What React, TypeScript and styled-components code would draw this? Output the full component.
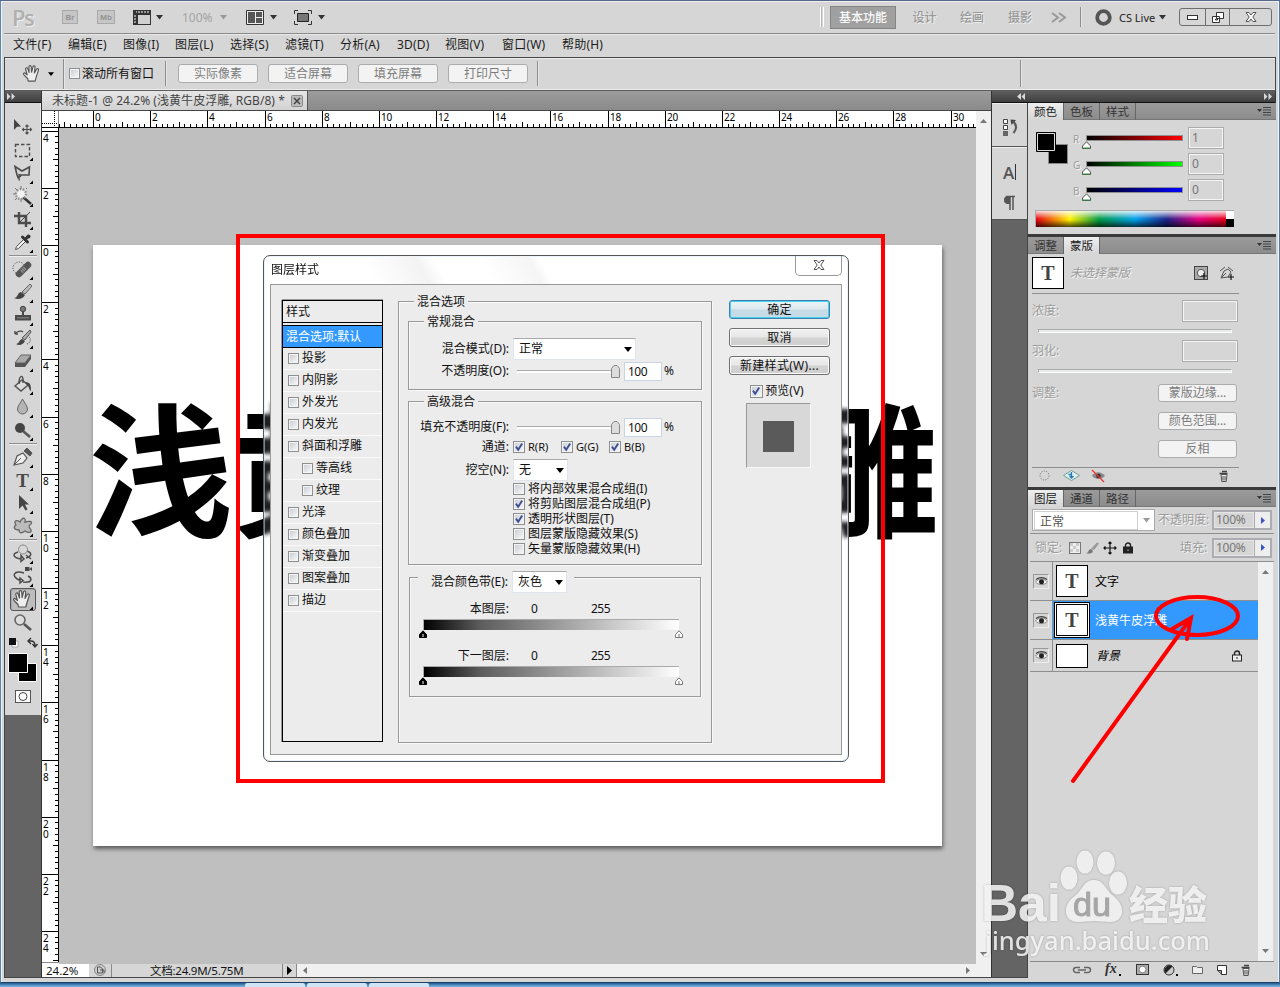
import React from "react";
import styled, { createGlobalStyle, css } from "styled-components";

const Global = createGlobalStyle`
  * { box-sizing: border-box; }
  html, body { margin: 0; padding: 0; width: 1280px; height: 987px; overflow: hidden; }
  body { font: 12px/16px "Noto Sans", "Noto Sans CJK SC", sans-serif; color: #111; }
  svg { display: block; flex: none; overflow: visible; }
`;

/* ---------- frame ---------- */
const Desktop = styled.div`
  position: relative; width: 1280px; height: 987px; overflow: hidden;
  background: #d6d6d6;
  border-top: 1px solid #55668a;
  display: flex; flex-direction: column;
`;
const Shell = styled.div`
  height: 982px; display: flex; flex-direction: column; padding: 0 4px 4px 3px;
  border-left: 1px solid #5b86a8; border-right: 1px solid #5b7aa0; border-bottom: 1px solid #1f4166;
  background: #d6d6d6; box-shadow: inset 1px 0 #eef2f6, inset -1px 0 #eef2f6, inset 0 1px #eeeeee;
`;
const Taskbar = styled.div`
  flex: 1; display: flex; padding-left: 245px; gap: 2px; background: linear-gradient(#1e5a92, #7fbbe6);
`;
const TaskItem = styled.div` width: 60px; background: #cfe4f5; border-radius: 2px 2px 0 0; `;

/* ---------- application bar ---------- */
const AppBar = styled.div`
  height: 33px; display: flex; align-items: center; padding-left: 8px; border-bottom: 1px solid #8b8b8b;
`;
const PsLogo = styled.div`
  width: 50px; font: 600 22px/30px "Open Sans", sans-serif; color: #b0b0b0; text-shadow: 1px 1px #efefef; letter-spacing: -1.5px;
`;
const Chip = styled.div<{ $w?: number }>`
  width: ${p => p.$w || 16}px; height: 14px; border: 1px solid #a9a9a9; background: #c6c6c6;
  font: bold 8px/13px "Liberation Sans", sans-serif; color: #929292; text-align: center;
`;
const Gap = styled.div<{ $w: number }>` width: ${p => p.$w}px; flex: none; white-space: nowrap; `;
const Pct = styled.div` width: 38px; color: #a4a4a4; font-size: 12px; padding-top: 1px; `;
const Grow = styled.div` flex: 1; `;
const DoubleBar = styled.div` width: 4px; height: 20px; border-left: 1px solid #fff; border-right: 1px solid #fff; box-shadow: inset 1px 0 #b5b5b5; margin-right: 6px; `;
const Workspace = styled.div<{ $on?: boolean; $w: number }>`
  width: ${p => p.$w}px; height: 23px; line-height: 24px; text-align: center; color: #989898; text-shadow: 1px 1px #eee; font-weight: 500;
  ${p => p.$on && css`background: #a0a0a0; border: 1px solid #848484; color: #fafafa; text-shadow: none; line-height: 22px;`}
`;
const VLine = styled.div<{ $h: number }>` width: 1px; flex: none; height: ${p => p.$h}px; background: #8d8d8d; box-shadow: 1px 0 #e6e6e6; `;
const Live = styled.div` width: 40px; font-size: 11px; white-space: nowrap; color: #222; padding-top: 1px; `;
const WinButtons = styled.div`
  display: flex; width: 93px; height: 18px; border: 1px solid #6e6e6e; border-radius: 3px; margin-right: 3px;
`;
const WinButton = styled.div<{ $w: number }>`
  width: ${p => p.$w}px; display: flex; align-items: center; justify-content: center;
  & + & { border-left: 1px solid #6e6e6e; }
`;

const MenuBar = styled.div`
  height: 23px; display: flex; align-items: center; padding-left: 9px; border-top: 1px solid #e8e8e8; padding-bottom: 2px;
`;
const MenuItem = styled.div<{ $w: number }>` width: ${p => p.$w}px; white-space: nowrap; letter-spacing: 0.2px; color: #1c1c1c; `;

/* ---------- options bar ---------- */
const Options = styled.div`
  height: 34px; display: flex; align-items: center; border: 1px solid #454545; border-bottom: 1px solid #5b5b5b;
  box-shadow: inset 0 1px #ececec, inset 0 -1px #ececec; margin-right: -1px; padding-bottom: 1px;
`;
const Grip = styled.div` width: 4px; height: 23px; margin: 0 9px 0 4px; background: radial-gradient(#8f8f8f 40%, transparent 50%) 0 0 / 2px 2px; `;
const PushButton = styled.div<{ $w: number; $h?: number }>`
  width: ${p => p.$w}px; height: ${p => p.$h || 19}px; line-height: ${p => (p.$h || 19) - 2}px; text-align: center;
  border: 1px solid #a9abad; border-radius: 3px; background: #f3f3f3; color: #7c7c7c; white-space: nowrap;
`;
const ButtonSet = styled.div` display: flex; gap: 10px; margin: 0 9px 0 12px; `;
const BoxOuter = styled.span<{ $s: number }>`
  width: ${p => p.$s}px; height: ${p => p.$s}px; flex: none; border: 1px solid #8e8f8f; padding: 1px; background: #f4f4f4; display: block;
`;
const BoxInner = styled.span` display: block; width: 100%; height: 100%; background: linear-gradient(135deg, #cbcfd5, #f6f6f6); `;
const Check = ({ s = 12, on = false }: { s?: number; on?: boolean }) => (
  <BoxOuter $s={s}>
    <BoxInner>{on && <svg width="8" height="8" viewBox="0 0 8 8"><path d="M1 3.6 3.2 6.8 7.2 .6" fill="none" stroke="#3d4f97" strokeWidth="1.9" /></svg>}</BoxInner>
  </BoxOuter>
);

/* ---------- body ---------- */
const Body = styled.div` flex: 1; min-height: 0; display: flex; border-left: 1px solid #454545; border-bottom: 1px solid #454545; margin-right: -1px; border-right: 1px solid #3a3a3a; background: #646464; `;
const DarkHead = styled.div`
  height: 12px; display: flex; align-items: center; justify-content: space-between; padding: 0 2px;
  background: linear-gradient(#5e5e5e, #3f3f3f); border-bottom: 1px solid #111; width: 100%;
`;
const Tools = styled.div` width: 37px; border-right: 1px solid #333; flex: none; `;
const ToolPanel = styled.div` height: 612px; background: #d6d6d6; display: flex; flex-direction: column; align-items: center; border-right: 1px solid #eaeaea; `;
const DotRow = styled.div<{ $w?: number }>` width: ${p => p.$w || 27}px; height: 3px; margin: 4px auto 6px; background: radial-gradient(#8d8d8d 40%, transparent 50%) 0 0 / 2px 2px; `;
const Tool = styled.div<{ $on?: boolean }>`
  width: 26px; height: 23px; flex: none; display: flex; align-items: center; justify-content: center;
  ${p => p.$on && css`background: #bdbdbd; border: 1px solid #555; border-radius: 3px; box-shadow: inset 1px 1px #a8a8a8;`}
`;
const ToolRule = styled.div` width: 28px; height: 2px; margin: 1px 0; background: #8f8f8f; border-bottom: 1px solid #eee; flex: none; `;

const Doc = styled.div` width: 950px; flex: none; border-right: 1px solid #333; display: flex; flex-direction: column; background: #bfbfbf; `;
const TabStrip = styled.div` height: 20px; flex: none; background: linear-gradient(#9c9c9c, #8a8a8a); border-bottom: 1px solid #444; display: flex; `;
const DocTab = styled.div`
  width: 266px; height: 19px; background: linear-gradient(#e6e6e6, #d2d2d2); border-right: 1px solid #555; padding: 1px 0 0 10px; display: flex; align-items: center; color: #444; white-space: nowrap;
`;
const TabTitle = styled.div` width: 239px; letter-spacing: .05px; `;
const DocRow = styled.div` display: flex; flex: 1; min-height: 0; `;
const Canvas = styled.div` position: relative; width: 917px; height: 836px; background: #bfbfbf; overflow: hidden; `;
const Paper = styled.div`
  position: absolute; left: 34px; top: 117px; width: 849px; height: 601px; background: #fff; box-shadow: 1px 3px 4px rgba(0,0,0,.5);
  font: 700 144px/148px "Noto Sans CJK SC", sans-serif; letter-spacing: -2.9px; color: #000; white-space: nowrap; padding-top: 144px; text-indent: -4px;
`;
const DocMain = styled.div` width: 934px; display: flex; flex-direction: column; `;
const VScroll = styled.div<{ $w: number; $pb?: number }>`
  width: ${p => p.$w}px; flex: none; background: #f0f0f0; display: flex; flex-direction: column; justify-content: space-between; align-items: center; padding: 6px 0 ${p => p.$pb || 6}px;
`;
const Status = styled.div` height: 15px; flex: none; display: flex; background: #d6d6d6; border-top: 1px solid #8a8a8a; align-items: center; `;
const Zoomed = styled.div` width: 47px; background: #fff; padding-left: 4px; font-size: 11.5px; line-height: 16px; height: 14px; `;
const StatusIcon = styled.div` width: 23px; height: 14px; display: flex; align-items: center; justify-content: center; border-right: 1px solid #888; `;
const DocSize = styled.div` width: 171px; height: 14px; line-height: 15px; padding-left: 38px; border-right: 1px solid #888; font-size: 11.5px; letter-spacing: -.25px; white-space: nowrap; `;
const StatusArrow = styled.div` width: 14px; height: 14px; border-right: 1px solid #888; display: flex; align-items: center; justify-content: center; `;
const HScroll = styled.div` flex: 1; height: 14px; background: #f0f0f0; display: flex; align-items: center; justify-content: space-between; padding: 0 5px; `;

/* ---------- dock ---------- */
const Dock = styled.div` flex: 1; min-width: 0; display: flex; flex-direction: column; `;
const DockHeads = styled(DarkHead)` padding: 0 3px 0 25px; `;
const DockRow = styled.div` display: flex; flex: 1; min-height: 0; `;
const IconCol = styled.div` width: 36px; border-right: 1px solid #444; flex: none; `;
const IconGroup = styled.div<{ $h: number }>` height: ${p => p.$h}px; background: #d6d6d6; border-bottom: 1px solid #555; border-top: 1px solid #eee; display: flex; flex-direction: column; align-items: center; `;
const Panels = styled.div` flex: 1; display: flex; flex-direction: column; background: #3a3a3a; gap: 3px; `;
const Panel = styled.div<{ $h: number }>` height: ${p => p.$h}px; flex: none; background: #d6d6d6; display: flex; flex-direction: column; `;
const PanelTabs = styled.div` height: 17px; flex: none; display: flex; background: linear-gradient(#9b9b9b, #8c8c8c); border-bottom: 1px solid #777; `;
const PanelTab = styled.div<{ $on?: boolean }>`
  width: 36px; height: 17px; line-height: 17px; padding-left: 6px; font-size: 11.5px; white-space: nowrap; border-right: 1px solid #666; color: #333;
  ${p => p.$on && css`background: linear-gradient(#eee, #d6d6d6); color: #222;`}
`;
const TabMenu = styled.div` margin-left: auto; padding: 4px 5px 0 0; `;
const PanelBody = styled.div<{ $p?: string }>` flex: 1; min-height: 0; padding: ${p => p.$p || "0"}; `;
const Line = styled.div<{ $m?: string }>` height: 1px; background: #8e8e8e; margin: ${p => p.$m || "0"}; flex: none; `;
const Row = styled.div<{ $h: number; $p?: string; $mt?: number }>`
  display: flex; align-items: center; height: ${p => p.$h}px; padding: ${p => p.$p || "0"}; margin-top: ${p => p.$mt || 0}px; flex: none; white-space: nowrap;
`;
const Etched = styled.span<{ $w: number; $it?: boolean; $ml?: number }>`
  width: ${p => p.$w}px; margin-left: ${p => p.$ml || 0}px; flex: none; color: #9c9c9c; text-shadow: 1px 1px #f4f4f4; white-space: nowrap; font-style: ${p => (p.$it ? "italic" : "normal")};
`;
const ChannelName = styled(Etched)` padding-top: 4px; font-size: 10px; `;
const Etch = styled.div<{ $w: number; $h: number; $ml?: number }>`
  width: ${p => p.$w}px; height: ${p => p.$h}px; flex: none; border: 1px solid #acacac; box-shadow: inset 0 0 0 1px #f5f5f5; color: #777; padding: 0 3px; line-height: ${p => p.$h - 2}px; font-size: 12px;
  margin-left: ${p => p.$ml || 0}px;
`;
const ChannelBar = styled.div<{ $c: string }>` width: 97px; height: 6px; border: 1px solid #909090; background: linear-gradient(90deg, #000, ${p => p.$c}); margin-left: 6px; `;
const ChannelTrack = styled.div` width: 115px; padding-top: 3px; `;
const ColorRow = styled.div` display: flex; height: 26px; align-items: flex-start; `;
const ColorTop = styled.div` display: flex; height: 90px; padding-top: 7px; `;
const SwatchBox = styled.div` width: 45px; padding: 5px 0 0 8px; `;
const Rows = styled.div` flex: 1; `;
const Spectrum = styled.div`
  margin-left: 7px; width: 199px; height: 17px; border-top: 1px solid #aaa; border-left: 1px solid #aaa; display: flex; justify-content: flex-end;
  background: linear-gradient(rgba(255,255,255,.85), rgba(255,255,255,0) 50%, rgba(0,0,0,0) 55%, rgba(0,0,0,.7)), linear-gradient(90deg, #e60012, #fff100 17%, #009944 32%, #00a0e9 50%, #1d2088 66%, #e4007f 82%, #e60012 97%);
`;
const BW = styled.div` width: 8px; height: 16px; background: linear-gradient(#fff 50%, #000 50%); `;
const SliderGroove = styled.div` width: 194px; height: 4px; border: 1px solid #aaa; border-bottom-color: #fff; border-right-color: #fff; background: #e8ecea; `;
const Thumb = styled.div<{ $h?: number; $sel?: boolean }>`
  width: 32px; height: ${p => p.$h || 32}px; background: #fff; border: 1px solid #000; flex: none; display: flex; align-items: center; justify-content: center;
  font: bold 20px/28px "Liberation Serif", serif; color: #444;
  ${p => p.$sel && css`outline: 1px solid #fff; box-shadow: 0 0 0 2px #000;`}
`;
const Combo = styled.div`
  width: 123px; height: 22px; border: 1px solid #aaa; background: #fff; display: flex; align-items: center; justify-content: space-between; padding-right: 4px; color: #555;
`;
const ComboText = styled.div` width: 104px; height: 19px; border: 1px solid #d0d0d0; line-height: 20px; padding-left: 5px; margin-left: 1px; `;
const Percent = styled.div` width: 60px; height: 20px; border: 2px solid #acacb2; display: flex; margin-left: auto; color: #777; `;
const PercentVal = styled.div` width: 40px; padding-left: 1px; font-size: 12px; letter-spacing: -.3px; border: 1px solid #e6e6e6; line-height: 14px; `;
const PercentBtn = styled.div` flex: 1; background: #eee; border-left: 1px solid #aaa; display: flex; align-items: center; justify-content: center; `;
const LayerArea = styled.div` display: flex; flex: 1; min-height: 0; padding-left: 2px; padding-right: 3px; `;
const Layers = styled.div` width: 228px; `;
const Layer = styled.div<{ $h: number }>` height: ${p => p.$h}px; display: flex; align-items: center; border-bottom: 1px solid #8e8e8e; `;
const EyeCell = styled.div` width: 23px; align-self: stretch; flex: none; border-right: 1px solid #8e8e8e; background: #d6d6d6; display: flex; align-items: center; justify-content: center; `;
const EyeBox = styled.div` width: 16px; height: 15px; border: 1px solid #999; border-right-color: #eee; border-bottom-color: #eee; display: flex; align-items: center; justify-content: center; `;
const LayerBody = styled.div<{ $on?: boolean }>`
  flex: 1; align-self: stretch; display: flex; align-items: center; padding-left: 3px; gap: 7px; background: ${p => (p.$on ? "#3399ff" : "transparent")}; color: ${p => (p.$on ? "#fff" : "#000")};
`;
const LayerName = styled.span` padding-top: 2px; `;
const Italic = styled.i` width: 130px; padding-left: 1px; `;
const PanelFoot = styled.div` height: 17px; flex: none; border-top: 1px solid #888; margin: 0 2px; display: flex; align-items: center; justify-content: space-between; padding: 0 23px 1px 43px; `;

/* ---------- layer style dialog ---------- */
const Dialog = styled.div`
  position: absolute; left: 263px; top: 254px; width: 586px; height: 507px; border: 1px solid #555; border-radius: 7px; padding: 0 6px 6px;
  background: rgba(255,255,255,.12); backdrop-filter: blur(2px); display: flex; flex-direction: column; box-shadow: inset 0 0 0 1px rgba(215,232,255,.5);
`;
const DialogHead = styled.div`
  height: 28px; flex: none; display: flex; justify-content: space-between; padding-left: 1px; line-height: 28px; margin: 0 -4px 0 0;
  background: linear-gradient(62deg, transparent 18%, #f3f3f3 27%, transparent 30%, transparent 38%, #f5f5f5 46%, transparent 48%);
`;
const DialogClose = styled.div` width: 47px; height: 20px; margin-right: 4px; border: 1px solid #999; border-top: 0; border-radius: 0 0 5px 5px; display: flex; align-items: center; justify-content: center; padding-bottom: 1px; `;
const DialogBody = styled.div` flex: 1; border: 1px solid #999; background: #ececec; display: flex; padding: 15px 0 0 10px; `;
const StyleList = styled.div` width: 101px; height: 442px; margin-left: 1px; border: 1px solid #000; box-shadow: 0 -1px #999, -1px 0 #999; flex: none; display: flex; flex-direction: column; `;
const StyleHead = styled.div` height: 22px; line-height: 22px; padding-left: 3px; border-bottom: 1px solid #000; `;
const StyleSel = styled.div` height: 23px; line-height: 22px; margin-top: 2px; border-top: 1px solid #000; border-bottom: 1px solid #000; background: #3399ff; color: #fff; padding-left: 3px; `;
const StyleItem = styled.div<{ $sub?: boolean }>`
  height: 22px; border-bottom: 1px solid #fafafa; display: flex; align-items: center; gap: 3px; padding-left: ${p => (p.$sub ? 19 : 5)}px; white-space: nowrap;
`;
const StyleName = styled.span` padding-bottom: 2px; `;
const Group = styled.div<{ $w: number; $h: number; $m?: string; $p?: string }>`
  width: ${p => p.$w}px; height: ${p => p.$h}px; margin: ${p => p.$m || "0"}; padding: ${p => p.$p || "0"}; border: 1px solid #999; box-shadow: inset 1px 1px #f8f8f8, 1px 1px #f8f8f8; flex: none;
`;
const Legend = styled.div<{ $ml?: number }>` width: max-content; height: 14px; line-height: 14px; margin: -7px 0 0 ${p => p.$ml ?? 15}px; padding: 0 3px; background: #ececec; `;
const Label = styled.div<{ $w?: number }>` width: ${p => p.$w || 100}px; text-align: right; flex: none; margin-right: 4px; `;
const Select = styled.div<{ $w: number }>` width: ${p => p.$w}px; height: 22px; background: #fff; border: 1px solid #e0e4ec; border-top-color: #aaa; display: flex; align-items: center; justify-content: space-between; padding: 0 3px 0 5px; `;
const Groove = styled.div` width: 94px; height: 3px; border-top: 1px solid #aaa; background: #fff; margin-left: 4px; flex: none; `;
const Input = styled.div` width: 38px; height: 19px; background: #fff; border: 1px solid #c9d5e6; line-height: 18px; padding-left: 3px; font-size: 12px; letter-spacing: -.5px; margin: 0 2px 0 4px; `;
const CheckItem = styled.div<{ $w?: number; $gap?: number }>` display: flex; align-items: center; gap: ${p => p.$gap ?? 3}px; width: ${p => (p.$w ? p.$w + "px" : "auto")}; font-size: ${p => (p.$w ? 11 : 12)}px; `;
const BlendBar = styled.div` width: 256px; height: 11px; margin-left: 13px; border-top: 1px solid #aaa; border-left: 1px solid #aaa; background: linear-gradient(90deg, #000, #5c5c5c 22%, #fff); `;
const BlendHandles = styled.div` width: 266px; margin-left: 8px; display: flex; justify-content: space-between; height: 9px; `;
const Num = styled.div<{ $w: number; $ml: number }>` width: ${p => p.$w}px; margin-left: ${p => p.$ml}px; font-size: 12px; letter-spacing: -.5px; `;
const Side = styled.div` margin-left: 17px; width: 101px; display: flex; flex-direction: column; align-items: center; `;
const DialogButton = styled.div<{ $def?: boolean }>`
  width: 101px; height: 19px; line-height: 18px; margin-bottom: 9px; text-align: center; white-space: nowrap; border: 1px solid #707070; border-radius: 3px; flex: none; letter-spacing: .3px;
  background: linear-gradient(#f2f2f2, #e6e6e6 48%, #d3d3d3 52%, #cfcfcf); box-shadow: inset 0 0 0 1px #fafafa;
  ${p => p.$def && css`border-color: #3c7fb1; box-shadow: inset 0 0 0 1px #46d0f2; background: linear-gradient(#eef4f7, #dce8ee 48%, #c7dbe4 52%, #c4dbe6);`}
`;
const Preview = styled.div` width: 65px; height: 65px; margin: 5px 0 0 -2px; border: 1px solid #999; border-right-color: #f8f8f8; border-bottom-color: #f8f8f8; background: #d8d8d8; padding: 17px 16px; `;
const PreviewFill = styled.div` width: 31px; height: 31px; background: #5a5a5a; `;

/* ---------- annotations and watermark, drawn above the window ---------- */
const RedFrame = styled.div` position: absolute; left: 236px; top: 233px; width: 649px; height: 549px; border: 4px solid #f00; `;
const Marks = styled.svg` position: absolute; left: 1060px; top: 585px; `;
const Watermark = styled.div` position: absolute; left: 980px; top: 845px; width: 240px; height: 120px; color: rgba(250,250,250,.85); filter: drop-shadow(0 0 1px rgba(0,0,0,.28)); `;

const Down = ({ c = "#333", w = 8 }: { c?: string; w?: number }) => (
  <svg width={w} height={w / 2 + 1} viewBox="0 0 8 5"><path d="M0 0h8L4 5z" fill={c} /></svg>
);
const Tri = ({ d, c = "#777" }: { d: "u" | "d" | "l" | "r"; c?: string }) => {
  const p = { u: "M0 6 3.5 2 7 6z", d: "M0 1h7L3.5 5z", l: "M5 0v7L1 3.5z", r: "M2 0v7l4-3.5z" }[d];
  return <svg width="7" height="7" viewBox="0 0 7 7"><path d={p} fill={c} /></svg>;
};
const Chevs = ({ left }: { left?: boolean }) => (
  <svg width="8" height="7" viewBox="0 0 8 7"><path d={left ? "M4 0v7L0 3.5zM8 0v7L4.5 3.5z" : "M0 0v7l3.500-3.500zM4.500 0v7L8 3.500z"} fill="#d8d8d8" /></svg>
);
const PanelMenu = () => (
  <TabMenu><svg width="14" height="9" viewBox="0 0 14 9"><path d="M0 2h5L2.500 5z" fill="#333" /><path d="M6 .5h8M6 3h8M6 5.500h8M6 8h8" stroke="#444" /></svg></TabMenu>
);
const CloseX = () => (
  <svg width="12" height="10" viewBox="0 0 12 10"><path d="M1 .5h3L6 3 8 .5h3L7.800 5 11 9.500H8L6 7 4 9.500H1L4.200 5z" fill="#fff" stroke="#555" /></svg>
);

const HandShape = ({ w = 20 }: { w?: number }) => (
  <svg width={w} height={w} viewBox="0 0 20 20"><path d="M6.500 18 6 15.500 2 11.500C.8 10 2.300 8.700 3.700 10L5.500 11.500 3.800 5.500c-.4-1.700 1.600-2.200 2.200-.6L7.500 9 7.300 3c0-1.800 2.200-1.800 2.400 0l.4 5.700L11.500 3c.5-1.700 2.500-1.200 2.200.6L13 9.500l2.300-4c.9-1.300 2.600-.5 2 1L15 13.500 13.800 18z" fill="#eee" stroke="#555" strokeWidth="1.200" strokeLinejoin="round" /></svg>
);
const S = { fill: "none", stroke: "#4c4c4c", strokeWidth: 1.4 } as const;
const toolArt: Record<string, React.ReactNode> = {
  move: <><path d="M2 2v11l3-3.200 4-.3z" fill="#444" /><path d="M15 8v9M10.500 12.500h9M13.500 9.500 15 8l1.500 1.500M13.500 15.500 15 17l1.500-1.500M12 11l-1.500 1.500L12 14M18 11l1.500 1.500L18 14" {...S} strokeWidth={1.1} /></>,
  marquee: <rect x="3.500" y="4.500" width="14" height="12" {...S} strokeDasharray="3.500 2" />,
  lasso: <><path d="M3 3.500 10 8l7.500-4L17 12H9L6 14.500 5 12z" {...S} strokeWidth={1.600} /><path d="M6 12c3-1 4 1 1 2.500M6.500 14.500l1 3" {...S} /></>,
  wand: <><path d="M11 11l8 7" stroke="#333" strokeWidth="2.500" /><circle cx="9" cy="8" r="4" fill="#f2f2f2" /><circle cx="9" cy="8" r="5" fill="none" stroke="#8a8a8a" strokeWidth="2.400" strokeDasharray="1.300 1.800" /><path d="M9 0v3M1 8h3M9 13v3M14 3l1-1M3 2l2 2M3 14l2-2" stroke="#777" /></>,
  crop: <><path d="M7 3v11h12M2 7h12v11" {...S} strokeWidth={2.400} /><path d="M7 14 18 3" stroke="#444" /></>,
  eyedrop: <><path d="M3.500 17.500l1-3 7-7 2 2-7 7z" fill="#eee" stroke="#555" /><path d="M10.500 5l5 5M13 7.500l3-3" fill="none" stroke="#333" strokeWidth="3" strokeLinecap="round" /><circle cx="16.500" cy="4.500" r="2" fill="#333" /></>,
  heal: <><circle cx="7" cy="9" r="6" fill="none" stroke="#444" strokeDasharray="1 1.500" /><path d="M7 15 16 6" stroke="#555" strokeWidth="6.500" strokeLinecap="round" /><path d="M9.500 12.500l4-4" stroke="#aaa" strokeWidth="4" strokeDasharray="1 1" /></>,
  brush: <><path d="M10 10 18 2l2 2-7 8z" fill="#bbb" stroke="#666" /><path d="M2 16c4 0 3-5 7-6l4 3c-2 4-7 5-11 3z" fill="#444" /></>,
  stamp: <><circle cx="11" cy="4" r="2.700" fill="#777" stroke="#444" /><path d="M11 6v5M4 11h14v3.500H4z" fill="#777" stroke="#4a4a4a" strokeWidth="2" /></>,
  history: <><path d="M10 10 18 2l1 2-6 8z" fill="#aaa" stroke="#555" /><path d="M4 16c3 0 3-4 6-5l3 2c-2 4-6 5-9 3z" fill="#444" /><path d="M3 6c3-4 7-3 8-2M3 6V3M3 6h3" {...S} /><path d="M15 16c4-1 4-6 2-7" stroke="#444" fill="none" strokeDasharray="1 1" /></>,
  eraser: <><path d="M3 12 9 4h10l-6 8z" fill="#aaa" stroke="#666" /><path d="M3 12h10v4H3zM13 12l6-8v4l-6 8z" fill="#555" /></>,
  bucket: <><path d="M3 12 10 6l6 5-7 6z" fill="#ddd" stroke="#555" strokeWidth="1.500" /><path d="M7 10c0-10 5-10 4-1" {...S} /><path d="M13 8c6 0 6 4 6 9-2-1-2-5-4-6z" fill="#444" /></>,
  blur: <path d="M10.500 2c2 4 5 7 5 10a5 5 0 0 1-10 0c0-3 3-6 5-10z" fill="#b4b4b4" stroke="#666" />,
  dodge: <><circle cx="8" cy="8" r="5" fill="#444" /><path d="M11 11l7 6" stroke="#555" strokeWidth="2.500" /></>,
  pen: <><path d="M2 18 5 9l6-3 4 5-4 5z" fill="#eee" stroke="#555" strokeWidth="1.200" /><path d="M12 4l6 5 2-3-5-5zM2 18l7-7" fill="#555" stroke="#555" /></>,
  path: <path d="M7 2v14l3.500-3.500 3 5 2-1-2.500-5h4z" fill="#444" />,
  shape: <path d="M10 3c2-2 4 0 3 3 4-1 8-1 6 2-3 2-2 3 0 6 1 3-3 3-6 1-4 3-6 2-6-1-5 0-6-3-3-5-3-5 1-5 4-3 0-1 1-2 2-3z" fill="#bbb" stroke="#666" strokeWidth="1.300" />,
  rot: <><path d="M6 9C-1 11 2 15 9 16M15 8c6 2 4 6-1 7M9 12.500v6L12 16zM14 12l5 4" {...S} strokeWidth={1.500} /><circle cx="11" cy="6.500" r="4.500" fill="#d8d8d8" stroke="#888" /></>,
  orbit: <><path d="M12 7C2 4-2 10 8 14.500M8 12v5l3-2.500zM11 16c10 1 9-4 5-6" {...S} strokeWidth={1.500} /><path d="M13 1h4.500v4H13zM17.500 3 20 1v4z" fill="#444" /></>,
  hand: <HandShape w={20} />,
  zoom: <><circle cx="8" cy="8" r="5" fill="#ddd" stroke="#666" strokeWidth="1.600" /><path d="M12 12l7 6" stroke="#555" strokeWidth="2.600" /></>,
  type: <text x="10.500" y="17" textAnchor="middle" fontFamily="Liberation Serif" fontWeight="bold" fontSize="19" fill="#4a4a4a">T</text>,
};
const ToolIcon = ({ n }: { n: string }) => (
  <svg width="21" height="21" viewBox="0 0 21 21">{toolArt[n]}{!["move", "zoom"].includes(n) && <path d="M21 17.500v3.500h-3.500z" fill="#000" />}</svg>
);
const toolSets = [
  ["move", "marquee", "lasso", "wand", "crop", "eyedrop"],
  ["heal", "brush", "stamp", "history", "eraser", "bucket", "blur", "dodge"],
  ["pen", "type", "path", "shape"],
  ["rot", "orbit", "hand", "zoom"],
];

const STEP = 5.717;
const TopRuler = () => (
  <svg width="934" height="17" viewBox="0 0 934 17">
    <rect width="934" height="17" fill="#fff" />
    {Array.from({ length: 162 }, (_, k) => k - 6).map(k => {
      const x = Math.round(51 + k * STEP) + 0.5;
      if (x < 17 || x > 932) return null;
      const y = k % 10 === 0 ? 0 : k % 5 === 0 ? 11 : 13;
      return <path key={k} d={`M${x} ${y}V17`} stroke="#000" />;
    })}
    {Array.from({ length: 16 }, (_, i) => (
      <text key={i} x={Math.round(51 + i * STEP * 10) + 2} y="10" fontFamily="Noto Sans" fontSize="10" letterSpacing="-.2">{i * 2}</text>
    ))}
    <path d="M0 12.500h17M12.500 0v17" stroke="#000" strokeDasharray="1 1" /><path d="M16.500 0v17" stroke="#888" />
    <path d="M0 16.500H934" stroke="#000" />
  </svg>
);
const SideRuler = () => (
  <svg width="17" height="836" viewBox="0 0 17 836">
    <rect width="17" height="836" fill="#fff" />
    {Array.from({ length: 150 }, (_, k) => k - 21).map(k => {
      const y = Math.round(117 + k * STEP) + 0.5;
      if (y < 0 || y > 836) return null;
      const x = k % 10 === 0 ? 0 : k % 5 === 0 ? 11 : 13;
      return <path key={k} d={`M${x} ${y}H17`} stroke="#000" />;
    })}
    {[-4, -2, 0, 2, 4, 6, 8, 10, 12, 14, 16, 18, 20, 22, 24].map(n =>
      String(Math.abs(n)).split("").map((c, i) => (
        <text key={`${n}-${i}`} x="1" y={117 + (n / 2) * STEP * 10 + 11 + i * 10} fontFamily="Noto Sans" fontSize="10">{c}</text>
      ))
    )}
    <path d="M16.500 0V836" stroke="#000" />
  </svg>
);

const Eye = () => (
  <svg width="13" height="9" viewBox="0 0 13 9"><path d="M.5 5c3-4 9-4 12 0-3 3.500-9 3.500-12 0z" fill="#eee" stroke="#777" strokeWidth=".8" /><circle cx="6.500" cy="4.700" r="2.500" fill="#222" /><path d="M1 2.500c3-2.500 8-2.500 11 0" stroke="#444" fill="none" strokeWidth="1.100" /></svg>
);
const Trash = () => (
  <svg width="10" height="12" viewBox="0 0 10 12"><path d="M2 4.500l.8 7h4.400l.8-7z" fill="#eee" stroke="#555" /><path d="M.5 3.500h8M3 1.500h5" stroke="#444" strokeWidth="1.500" /><path d="M4 6v4.500M6 6v4.500" stroke="#444" /></svg>
);
const Lock = ({ solid }: { solid?: boolean }) => (
  <svg width="10" height="12" viewBox="0 0 10 12"><path d="M2.500 5V3.500a2.500 2.500 0 0 1 5 0V5" fill="none" stroke="#222" strokeWidth="1.400" /><rect x=".5" y="5" width="9" height="6" fill={solid ? "#222" : "#eee"} stroke="#222" /><path d="M5 7v2" stroke={solid ? "#999" : "#222"} /></svg>
);
const UpHandle = ({ fill, stroke, tick }: { fill: string; stroke: string; tick: string }) => (
  <svg width="10" height="9" viewBox="0 0 10 9"><path d="M5 .8 8.500 4.500v3h-7v-3z" fill={fill} stroke={stroke} /><path d="M5 4v3" stroke={tick} /></svg>
);

const Channel = ({ n, c, v }: { n: string; c: string; v: string }) => (
  <ColorRow>
    <ChannelName $w={7}>{n}</ChannelName>
    <ChannelTrack>
      <Row $h={6} $mt={5}><ChannelBar $c={c} /></Row>
      <Row $h={8} $p="0 0 0 2px"><svg width="9" height="8" viewBox="0 0 9 8"><path d="M4.500 .8 8.500 5v2.500h-8V5z" fill="#fff" stroke="#555" /><path d="M1 7h7" stroke="#2c9a3c" /></svg></Row>
    </ChannelTrack>
    <Etch $w={36} $h={22} $ml={-7}>{v}</Etch>
  </ColorRow>
);

const styleItems: [string, boolean?][] = [["投影"], ["内阴影"], ["外发光"], ["内发光"], ["斜面和浮雕"], ["等高线", true], ["纹理", true], ["光泽"], ["颜色叠加"], ["渐变叠加"], ["图案叠加"], ["描边"]];
const menus: [string, number][] = [["文件(F)", 55], ["编辑(E)", 55], ["图像(I)", 52], ["图层(L)", 55], ["选择(S)", 55], ["滤镜(T)", 55], ["分析(A)", 57], ["3D(D)", 48], ["视图(V)", 57], ["窗口(W)", 60], ["帮助(H)", 50]];
const blendOptions: [string, boolean][] = [["将内部效果混合成组(I)", false], ["将剪贴图层混合成组(P)", true], ["透明形状图层(T)", true], ["图层蒙版隐藏效果(S)", false], ["矢量蒙版隐藏效果(H)", false]];

const Opacity = ({ label, mt }: { label: string; mt: number }) => (
  <Row $h={20} $mt={mt}>
    <Label>{label}</Label><Groove />
    <svg width="9" height="13" viewBox="0 0 9 13"><path d="M.5 12.500v-9L3 .5h3l2.500 3v9z" fill="#ddd" stroke="#888" /></svg>
    <Input>100</Input>%
  </Row>
);
const BlendRange = ({ label, mt }: { label: string; mt: number }) => (
  <>
    <Row $h={16} $mt={mt}><Label $w={99}>{label}</Label><Num $w={60} $ml={18}>0</Num><Num $w={30} $ml={0}>255</Num></Row>
    <Row $h={12} $mt={1}><BlendBar /></Row>
    <BlendHandles><UpHandle fill="#000" stroke="#000" tick="#fff" /><UpHandle fill="#fff" stroke="#777" tick="#777" /></BlendHandles>
  </>
);

const LayerStyleDialog = () => (
  <Dialog>
    <DialogHead>图层样式<DialogClose><CloseX /></DialogClose></DialogHead>
    <DialogBody>
      <StyleList>
        <StyleHead>样式</StyleHead>
        <StyleSel>混合选项:默认</StyleSel>
        {styleItems.map(([t, sub]) => <StyleItem key={t} $sub={sub}><Check s={11} /><StyleName>{t}</StyleName></StyleItem>)}
      </StyleList>
      <Group $w={314} $h={442} $m="1px 0 0 15px" $p="0 0 0 9px">
        <Legend $ml={6}>混合选项</Legend>
        <Group $w={294} $h={69} $m="12px 0 0">
          <Legend>常规混合</Legend>
          <Row $h={22} $mt={9}><Label>混合模式(D):</Label><Select $w={123}>正常<Down c="#000" /></Select></Row>
          <Opacity label="不透明度(O):" mt={1} />
        </Group>
        <Group $w={294} $h={164} $m="11px 0 0">
          <Legend>高级混合</Legend>
          <Opacity label="填充不透明度(F):" mt={8} />
          <Row $h={20}><Label>通道:</Label><CheckItem $w={48}><Check on />R(R)</CheckItem><CheckItem $w={48}><Check on />G(G)</CheckItem><CheckItem $w={48}><Check on />B(B)</CheckItem></Row>
          <Row $h={22} $mt={2}><Label>挖空(N):</Label><Select $w={55}>无<Down c="#000" /></Select></Row>
          {blendOptions.map(([t, on]) => <Row key={t} $h={15} $p="0 0 0 104px"><CheckItem><Check on={on} />{t}</CheckItem></Row>)}
        </Group>
        <Group $w={292} $h={120} $m="12px 0 0 1px">
          <Legend $ml={8}><Row $h={22} $mt={-6} $p="0 4px 0 0"><Label $w={87}>混合颜色带(E):</Label><Select $w={55}>灰色<Down c="#000" /></Select></Row></Legend>
          <BlendRange label="本图层:" mt={16} />
          <BlendRange label="下一图层:" mt={9} />
        </Group>
      </Group>
      <Side>
        <DialogButton $def>确定</DialogButton>
        <DialogButton>取消</DialogButton>
        <DialogButton>新建样式(W)...</DialogButton>
        <Row $h={14} $p="0 5px 0 0"><CheckItem $gap={2}><Check s={13} on />预览(V)</CheckItem></Row>
        <Preview><PreviewFill /></Preview>
      </Side>
    </DialogBody>
  </Dialog>
);

const Tabs = ({ items, on }: { items: string[]; on: number }) => (
  <PanelTabs>{items.map((t, i) => <PanelTab key={t} $on={i === on}>{t}</PanelTab>)}<PanelMenu /></PanelTabs>
);

export default function App() {
  return (
    <Desktop>
      <Global />
      <Shell>
        <AppBar>
          <PsLogo>Ps</PsLogo>
          <Chip>Br</Chip><Gap $w={19} /><Chip $w={18}>Mb</Chip><Gap $w={18} />
          <svg width="18" height="15" viewBox="0 0 18 15"><path d="M0 0h18v15H0z" fill="#333" /><path d="M5 5h12v9H5z" fill="#d0d0d0" /><path d="M3 2h1M6 1v2M9 1v2M12 1v2M15 1v2M1 6h2M1 9h2M1 12h2" stroke="#fff" /></svg>
          <Gap $w={5} /><Down w={7} /><Gap $w={19} /><Pct>100%</Pct><Down c="#999" w={7} /><Gap $w={19} />
          <svg width="18" height="15" viewBox="0 0 18 15"><path d="M.5.5h17v14H.5z" fill="#eee" stroke="#333" /><path d="M2 2h7v11H2zM10 2h6v5h-6zM10 8h6v5h-6z" fill="#555" /></svg>
          <Gap $w={6} /><Down w={7} /><Gap $w={17} />
          <svg width="18" height="15" viewBox="0 0 18 15"><path d="M.5 4V.5H4M14 .5h3.500V4M17.500 11v3.500H14M4 14.500H.5V11" stroke="#333" fill="none" /><path d="M3.500 3.500h11v8h-11z" fill="#777" stroke="#222" /></svg>
          <Gap $w={6} /><Down w={7} />
          <Grow />
          <DoubleBar />
          <Workspace $on $w={66}>基本功能</Workspace><Gap $w={5} /><Workspace $w={47}>设计</Workspace><Workspace $w={48}>绘画</Workspace><Workspace $w={48}>摄影</Workspace>
          <Gap $w={7} /><svg width="15" height="11" viewBox="0 0 15 11"><path d="M1 1l6 4.500L1 10M8 1l6 4.500L8 10" fill="none" stroke="#999" strokeWidth="2" /></svg>
          <Gap $w={14} /><VLine $h={20} /><Gap $w={14} />
          <svg width="17" height="17" viewBox="0 0 17 17"><circle cx="8.500" cy="8.500" r="6.300" fill="none" stroke="#555" strokeWidth="3.800" /></svg>
          <Gap $w={7} /><Live>CS Live</Live><Down w={7} /><Gap $w={13} />
          <WinButtons>
            <WinButton $w={25}><svg width="11" height="5" viewBox="0 0 11 5"><rect x=".5" y=".5" width="10" height="4" fill="#fff" stroke="#333" /></svg></WinButton>
            <WinButton $w={25}><svg width="12" height="11" viewBox="0 0 12 11"><path d="M4.500.5h7v6h-7zM.5 4.500h7v6h-7z" fill="#fff" stroke="#333" /><path d="M3.500 7h2v1h-2z" fill="#fff" stroke="#333" /></svg></WinButton>
            <WinButton $w={42}><CloseX /></WinButton>
          </WinButtons>
        </AppBar>
        <MenuBar>{menus.map(([t, w]) => <MenuItem key={t} $w={w}>{t}</MenuItem>)}</MenuBar>
        <Options>
          <Grip /><HandShape w={19} /><Gap $w={7} /><Down c="#000" w={6} /><Gap $w={9} /><VLine $h={30} /><Gap $w={5} />
          <Check s={11} /><Gap $w={2} /><Gap $w={83}>滚动所有窗口</Gap><VLine $h={25} />
          <ButtonSet>{["实际像素", "适合屏幕", "填充屏幕", "打印尺寸"].map(t => <PushButton key={t} $w={80}>{t}</PushButton>)}</ButtonSet>
          <VLine $h={25} /><Gap $w={482} /><VLine $h={27} />
        </Options>
        <Body>
          <Tools>
            <DarkHead><Chevs /></DarkHead>
            <ToolPanel>
              <DotRow />
              {toolSets.map((set, i) => (
                <React.Fragment key={i}>
                  {i > 0 && <ToolRule />}
                  {set.map(n => <Tool key={n} $on={n === "hand"}><ToolIcon n={n} /></Tool>)}
                </React.Fragment>
              ))}
              <svg width="36" height="72" viewBox="0 0 36 72">
                <path d="M7 7h6v6H7z" fill="#fff" stroke="#aaa" /><path d="M4 4h7v7H4z" fill="#111" />
                <path d="M23 7h3q4 0 4 5M26 4l-3 3 3 3M27.500 10l2.500 3 2.500-3" fill="none" stroke="#333" strokeWidth="1.400" />
                <path d="M13.500 29.500h18v18h-18z" fill="#000" stroke="#fff" /><path d="M3.500 19.500h19v19h-19z" fill="#000" stroke="#fff" />
                <rect x="10.500" y="56.500" width="15" height="12" fill="#fff" stroke="#555" /><circle cx="18" cy="62.500" r="4" fill="#fff" stroke="#444" />
              </svg>
            </ToolPanel>
          </Tools>
          <Doc>
            <TabStrip>
              <DocTab>
                <TabTitle>未标题-1 @ 24.2% (浅黄牛皮浮雕, RGB/8) *</TabTitle>
                <svg width="12" height="12" viewBox="0 0 12 12"><rect x=".5" y=".5" width="11" height="11" rx="1" fill="#bbb" stroke="#888" /><path d="M3 3l6 6M9 3l-6 6" stroke="#444" strokeWidth="1.500" /></svg>
              </DocTab>
            </TabStrip>
            <DocRow>
              <DocMain>
                <TopRuler />
                <DocRow>
                  <SideRuler />
                  <Canvas><Paper>浅黄牛皮浮雕</Paper></Canvas>
                </DocRow>
                <Status>
                  <Zoomed>24.2%</Zoomed>
                  <StatusIcon><svg width="12" height="12" viewBox="0 0 12 12"><circle cx="6" cy="6" r="5.500" fill="#ccc" stroke="#888" /><path d="M3.500 3h3l2 2v4h-5zM6 6h4v3" fill="none" stroke="#555" /></svg></StatusIcon>
                  <DocSize>文档:24.9M/5.75M</DocSize>
                  <StatusArrow><svg width="5" height="9" viewBox="0 0 5 9"><path d="M0 0v9l5-4.500z" /></svg></StatusArrow>
                  <HScroll><Tri d="l" /><Tri d="r" /></HScroll>
                </Status>
              </DocMain>
              <VScroll $w={15} $pb={19}><Tri d="u" /><Tri d="d" /></VScroll>
            </DocRow>
          </Doc>
          <Dock>
            <DockHeads><Chevs left /><Chevs /></DockHeads>
            <DockRow>
              <IconCol>
                <IconGroup $h={44}>
                  <DotRow />
                  <svg width="16" height="17" viewBox="0 0 16 17"><path d="M1.500 2.500h4v4h-4zM1.500 8.500h4v4h-4z" fill="#fff" stroke="#444" /><path d="M1 14h5v5H1z" fill="#666" /><path d="M8.500 2.500l5.500.5-4.500 5z" fill="#444" /><path d="M11 4c4 4 4 8 .5 12" stroke="#555" strokeWidth="2" fill="none" /></svg>
                </IconGroup>
                <IconGroup $h={73}>
                  <DotRow />
                  <svg width="16" height="54" viewBox="0 0 16 54"><text x="1" y="18" fontFamily="Open Sans" fontSize="17" fontWeight="600" fill="#555">A</text><path d="M13.500 3v16" stroke="#333" /><path d="M8 35v14M11 35v14M4 35.500h9" stroke="#555" strokeWidth="1.500" /><path d="M8 35H6a4 4 0 0 0 0 8h2z" fill="#555" /></svg>
                </IconGroup>
              </IconCol>
              <Panels>
                <Panel $h={131}>
                  <Tabs items={["颜色", "色板", "样式"]} on={0} />
                  <PanelBody>
                    <ColorTop>
                      <SwatchBox><svg width="33" height="33" viewBox="0 0 33 33"><path d="M12.500 12.500h19v19h-19z" fill="#000" stroke="#888" /><path d="M.5.500h19v19H.5z" fill="#000" stroke="#000" /><path d="M1.500 1.500h17v17h-17z" fill="none" stroke="#ddd" /></svg></SwatchBox>
                      <Rows><Channel n="R" c="#f00" v="1" /><Channel n="G" c="#0f0" v="0" /><Channel n="B" c="#00f" v="0" /></Rows>
                    </ColorTop>
                    <Spectrum><BW /></Spectrum>
                  </PanelBody>
                </Panel>
                <Panel $h={250}>
                  <Tabs items={["调整", "蒙版"]} on={1} />
                  <PanelBody $p="3px 37px 0 4px">
                    <Row $h={32}>
                      <Thumb>T</Thumb><Gap $w={6} /><Etched $w={124} $it>未选择蒙版</Etched>
                      <svg width="14" height="14" viewBox="0 0 14 14"><rect x=".5" y=".5" width="13" height="13" fill="#aaa" stroke="#444" /><circle cx="7" cy="7" r="3.700" fill="#eee" stroke="#555" /><path d="M10 7v6M7 10h6" stroke="#111" strokeWidth="1.200" /></svg>
                      <Gap $w={12} />
                      <svg width="14" height="14" viewBox="0 0 14 14"><path d="M1 12 4 5l4-2 3 3-3 5zM1 12l5-5M0 5l5-4M8 1l5 4" fill="none" stroke="#555" /><path d="M11 8v6M8 11h6" stroke="#111" strokeWidth="1.200" /></svg>
                    </Row>
                    <Line $m="4px 0 0" />
                    <Row $h={34}><Etched $w={150}>浓度:</Etched><Etch $w={56} $h={22} /></Row>
                    <Row $h={6} $p="0 0 0 6px"><SliderGroove /></Row>
                    <Row $h={34}><Etched $w={150}>羽化:</Etched><Etch $w={56} $h={22} /></Row>
                    <Row $h={6} $p="0 0 0 6px"><SliderGroove /></Row>
                    <Row $h={18} $mt={10}><Etched $w={126}>调整:</Etched><PushButton $w={79} $h={18}>蒙版边缘...</PushButton></Row>
                    <Row $h={18} $mt={10} $p="0 0 0 126px"><PushButton $w={79} $h={18}>颜色范围...</PushButton></Row>
                    <Row $h={18} $mt={10} $p="0 0 0 126px"><PushButton $w={79} $h={18}>反相</PushButton></Row>
                    <Line $m="9px 0 0" />
                    <Row $h={15} $p="0 0 0 7px">
                      <svg width="11" height="11" viewBox="0 0 11 11"><circle cx="5.500" cy="5.500" r="4.500" fill="none" stroke="#666" strokeDasharray="1 1.500" /></svg><Gap $w={13} />
                      <svg width="17" height="11" viewBox="0 0 17 11"><path d="M8.500.5 16.500 5.500l-8 5-8-5z" fill="#e2f2ee" stroke="#6f9c95" /><path d="M8.500 2v5M5.500 4.500h3M6.500 6l2 2 2-2" fill="none" stroke="#257ab5" strokeWidth="1.300" /></svg><Gap $w={12} />
                      <svg width="13" height="12" viewBox="0 0 13 12"><path d="M0 6c3-5 9-5 13 0-4 4-9 4-13 0z" fill="#888" /><circle cx="6.500" cy="6" r="2.300" fill="#333" /><path d="M0 0l12 12" stroke="#e33" strokeWidth="1.300" /></svg><Gap $w={114} /><Trash />
                    </Row>
                  </PanelBody>
                </Panel>
                <Panel $h={488}>
                  <Tabs items={["图层", "通道", "路径"]} on={0} />
                  <Row $h={26} $p="0 4px"><Combo><ComboText>正常</ComboText><Down c="#999" w={7} /></Combo><Etched $w={54} $ml={3}>不透明度:</Etched><Percent><PercentVal>100%</PercentVal><PercentBtn><Tri d="r" c="#3b53c4" /></PercentBtn></Percent></Row>
                  <Line $m="0 2px" />
                  <Row $h={27} $p="0 4px 0 7px">
                    <Etched $w={34}>锁定:</Etched>
                    <svg width="12" height="12" viewBox="0 0 12 12"><rect x=".5" y=".5" width="11" height="11" fill="#eee" stroke="#777" /><path d="M1 1h3v3H1zM7 1h3v3H7zM4 4h3v3H4zM1 7h3v3H1zM7 7h3v3H7z" fill="#ccc" /></svg><Gap $w={5} />
                    <svg width="13" height="12" viewBox="0 0 13 12"><path d="M5 7 11 .5l2 1L8 8z" fill="#999" /><path d="M0 11c3 0 2-4 5-4l2 2c-1 3-4 3-7 2z" fill="#777" /></svg><Gap $w={5} />
                    <svg width="12" height="12" viewBox="0 0 12 12"><path d="M6 0v12M0 6h12M4.500 1.500 6 0l1.500 1.500M4.500 10.500 6 12l1.500-1.500M1.500 4.500 0 6l1.500 1.500M10.500 4.500 12 6l-1.500 1.500" fill="none" stroke="#111" strokeWidth="1.200" /></svg><Gap $w={7} />
                    <Lock solid /><Gap $w={47} /><Etched $w={28}>填充:</Etched><Percent><PercentVal>100%</PercentVal><PercentBtn><Tri d="r" c="#3b53c4" /></PercentBtn></Percent>
                  </Row>
                  <Line $m="0 2px" />
                  <LayerArea>
                    <Layers>
                      <Layer $h={39}><EyeCell><EyeBox><Eye /></EyeBox></EyeCell><LayerBody><Thumb>T</Thumb><LayerName>文字</LayerName></LayerBody></Layer>
                      <Layer $h={39}><EyeCell><EyeBox><Eye /></EyeBox></EyeCell><LayerBody $on><Thumb $sel>T</Thumb><LayerName>浅黄牛皮浮雕</LayerName></LayerBody></Layer>
                      <Layer $h={32}><EyeCell><EyeBox><Eye /></EyeBox></EyeCell><LayerBody><Thumb $h={24} /><Italic>背景</Italic><Lock /></LayerBody></Layer>
                    </Layers>
                    <VScroll $w={15}><Tri d="u" /><Tri d="d" /></VScroll>
                  </LayerArea>
                  <PanelFoot>
                    <svg width="18" height="8" viewBox="0 0 18 8"><path d="M7 1.500H3a2.500 2.500 0 0 0 0 5h4M11 1.500h4a2.500 2.500 0 0 1 0 5h-4M5 4h8" fill="none" stroke="#666" strokeWidth="1.500" /></svg>
                    <svg width="17" height="13" viewBox="0 0 17 13"><text x="0" y="10" fontFamily="Liberation Serif" fontStyle="italic" fontWeight="bold" fontSize="14" fill="#333">fx</text><path d="M14 11h2v2h-2z" /></svg>
                    <svg width="13" height="11" viewBox="0 0 13 11"><rect x=".5" y=".5" width="12" height="10" fill="#aaa" stroke="#333" /><circle cx="6.500" cy="5.500" r="3.300" fill="#fff" stroke="#555" strokeWidth=".6" /></svg>
                    <svg width="15" height="12" viewBox="0 0 15 12"><circle cx="6" cy="6" r="5" fill="#ccc" stroke="#333" /><path d="M2.500 9.500a5 5 0 0 1 7-7z" fill="#222" /><path d="M13 10h2v2h-2z" /></svg>
                    <svg width="11" height="9" viewBox="0 0 11 9"><path d="M.5 8.500v-7h4l1 1h5v6z" fill="#eee" stroke="#666" /></svg>
                    <svg width="10" height="10" viewBox="0 0 10 10"><path d="M.5.500h9v9h-5l-4-4z" fill="#fff" stroke="#333" /><path d="M4.500 9.500v-4h-4" fill="#999" stroke="#333" /></svg>
                    <Trash />
                  </PanelFoot>
                </Panel>
              </Panels>
            </DockRow>
          </Dock>
        </Body>
      </Shell>
      <Taskbar><TaskItem /><TaskItem /><TaskItem /></Taskbar>

      <LayerStyleDialog />
      <RedFrame />
      <Marks width="190" height="200" viewBox="0 0 190 200" fill="none" stroke="#f00" strokeWidth="4" strokeLinecap="round">
        <ellipse cx="137" cy="30" rx="41" ry="19" /><path d="M13 195 131 32M112 43l19-11-4 21" />
      </Marks>
      <Watermark>
        <svg width="240" height="120" viewBox="0 0 240 120" fill="currentColor">
          <text x="1" y="75" fontFamily="Liberation Sans" fontWeight="bold" fontSize="52" textLength="80" lengthAdjust="spacingAndGlyphs">Bai</text>
          <ellipse cx="89" cy="32" rx="8.500" ry="11.500" /><ellipse cx="105" cy="16" rx="8.500" ry="11.500" /><ellipse cx="126" cy="17" rx="9" ry="11.500" /><ellipse cx="138" cy="37" rx="9" ry="11.500" />
          <path d="M114 34c9 0 11 8 17 14 6 5 11 9 11 17 0 7-5 11-12 11-6 0-10-1-16-1s-10 1-16 1c-7 0-12-4-12-11 0-8 5-12 11-17 6-6 8-14 17-14z" />
          <text x="93" y="70" fontFamily="Liberation Sans" fontWeight="normal" fontSize="33" fill="#a6a6a6" stroke="#a6a6a6" textLength="38" lengthAdjust="spacingAndGlyphs">du</text>
          <text x="149" y="73" fontFamily="Noto Sans CJK SC" fontWeight="900" fontSize="39">经验</text>
          <text x="5" y="104" fontFamily="Noto Sans" fontSize="25" fontWeight="500" textLength="225" lengthAdjust="spacingAndGlyphs">jingyan.baidu.com</text>
        </svg>
      </Watermark>
    </Desktop>
  );
}
